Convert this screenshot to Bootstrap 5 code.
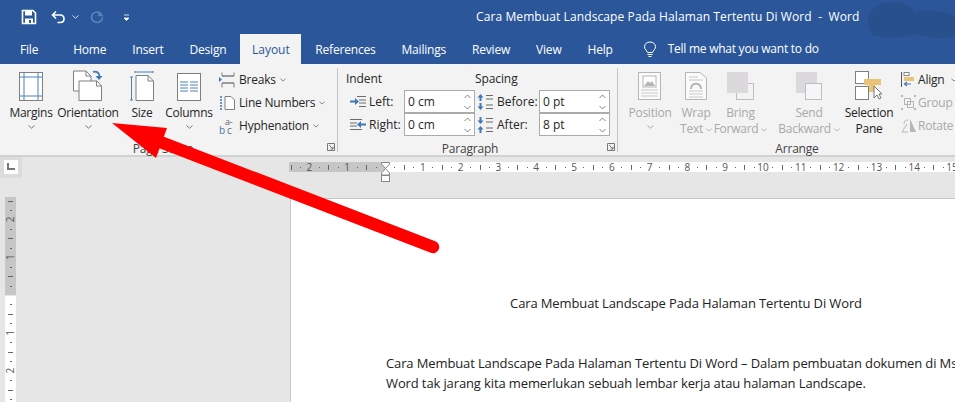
<!DOCTYPE html>
<html lang="id">
<head>
    <meta charset="UTF-8">
    <meta name="viewport" content="width=device-width, initial-scale=1.0">
    <title>Cara Membuat Landscape Pada Halaman Tertentu Di Word - Word</title>
    <link href="https://cdn.jsdelivr.net/npm/bootstrap@5.3.0/dist/css/bootstrap.min.css" rel="stylesheet">
    <style>
        html, body { height: 402px; overflow: hidden; }
        body { font-family: "Open Sans", "Noto Sans", sans-serif; font-size: 12px; color: #262626; background: #e6e6e6; position: relative; width: 955px; }
        svg { display: block; flex: none; }

        .title-area { background: #2b579a; color: #fff; height: 64px; position: relative; overflow: hidden; }
        .title-blob { position: absolute; right: 0; top: 0; }
        .qat { height: 34px; position: relative; }
        .qat-group { width: 134px; flex: none; padding-left: 21px; }
        .doc-title { margin-left: 342px; white-space: pre; letter-spacing: .1px; }
        .tab-row { height: 30px; position: relative; padding-left: 6px; }
        .tab-item { padding: 7px 13px 0; height: 30px; white-space: nowrap; letter-spacing: -.2px; }
        .tab-file { padding-left: 14px; padding-right: 22px; }
        .tab-on { background: #f3f3f3; color: #2b579a; height: 30px; width: 61px; text-align: center; padding: 7px 0 0; margin: 0 1px; }
        .tell-me { margin-left: 17px; height: 30px; letter-spacing: -.25px; }
        .tell-text { margin-left: 11px; }

        .ribbon { background: #f3f3f3; height: 93px; border-bottom: 2px solid #d2d2d2; }
        .rb-group { height: 91px; position: relative; flex: none; }
        .rb-group::after { content: ""; position: absolute; right: 0; top: 4px; bottom: 3px; width: 1px; background: #c6c6c6; }
        .rb-last::after { display: none; }
        .rb-label { position: absolute; left: 0; right: 0; top: 77px; text-align: center; line-height: 15px; color: #444; letter-spacing: -.2px; }
        .rb-launch { position: absolute; right: 3px; top: 79px; }
        .big-btn { display: flex; flex-direction: column; align-items: center; flex: none; padding-top: 6px; line-height: 16px; letter-spacing: -.25px; white-space: nowrap; }
        .big-ico { height: 31px; margin-bottom: 4px; display: flex; align-items: flex-end; }
        .off { color: #a9a9a9; }
        .small-btn { height: 23px; white-space: nowrap; letter-spacing: -.2px; }
        .para-lbl { height: 26px; padding-top: 7px; line-height: 16px; letter-spacing: -.1px; }
        .spin-box { height: 23px; width: 71px; background: #fff; border: 1px solid #ababab; display: flex; justify-content: space-between; align-items: center; padding: 0 3px; }
        .field-row { height: 23px; white-space: nowrap; }

        .work { height: 245px; position: relative; }
        .corner-box { width: 22px; height: 21px; background: #dcdcdc; padding: 3px 4px; }
        .corner-in { width: 14px; height: 14px; background: #fff; padding: 3px; }
        .h-ruler { position: absolute; left: 289px; top: 5px; }
        .v-ruler { position: absolute; left: 5px; top: 40px; }
        .page-sheet { position: absolute; left: 290px; top: 41px; width: 665px; height: 204px; background: #fff; border-left: 1px solid #c6c6c6; border-top: 1px solid #c6c6c6; overflow: hidden; font-size: 13px; color: #222; }
        .page-in { width: 790px; padding-left: 95px; padding-top: 94px; white-space: nowrap; line-height: 20px; letter-spacing: -.12px; }
        .page-head { text-align: center; margin-left: -95px; margin-bottom: 40px; }
        .red-arrow { position: absolute; left: 0; top: 0; pointer-events: none; }
    </style>
</head>
<body>
    <!-- Judul dan tab -->
    <div class="title-area">
        <svg class="title-blob" width="90" height="45" viewBox="0 0 90 45"><path d="M8 36C-2 24 2 6 20 3C34 0 44 4 50 12C60 10 78 10 90 16V37C74 40 58 36 48 34C36 38 24 38 8 36Z" fill="#28508c"/></svg>
        <div class="qat d-flex align-items-center">
            <div class="qat-group d-flex align-items-center">
                <svg width="16" height="16" viewBox="0 0 16 16"><path d="M1.5 1.5H12L14.5 4V14.5H1.5Z" fill="none" stroke="#fff" stroke-width="1.6"/><rect x="4" y="2" width="7" height="4.5" fill="#fff"/><rect x="4" y="9.5" width="8" height="5" fill="#fff"/><rect x="8" y="11" width="2" height="3" fill="#2b579a"/></svg>
                <svg style="margin-left:14px" width="15" height="14" viewBox="0 0 15 14"><path d="M5 1.5L1.5 5L5 8.5M2 5H9C11.5 5 13 6.5 13 8.7C13 11 11.5 12.5 9 12.5H6.5" fill="none" stroke="#fff" stroke-width="1.6"/></svg>
                <svg style="margin-left:6px" width="7" height="4" viewBox="0 0 7 4"><path d="M.5.5L3.5 3.2L6.5.5" fill="none" stroke="#d5deeb" stroke-width="1"/></svg>
                <svg style="margin-left:11px" width="14" height="14" viewBox="0 0 14 14"><path d="M9 1.5V5.5H13M11.5 4.5C10.5 2.8 9 2 7 2C4 2 1.5 4.3 1.5 7.2C1.5 10 4 12.5 7 12.5C10 12.5 12.5 10 12.5 7.2" fill="none" stroke="#5f83b8" stroke-width="1.6"/></svg>
                <svg style="margin-left:19px" width="7" height="7" viewBox="0 0 7 7"><path d="M1 1H6M1 4H6L3.5 6.5Z" fill="#fff" stroke="#fff" stroke-width=".8"/></svg>
            </div>
            <div class="doc-title">Cara Membuat Landscape Pada Halaman Tertentu Di Word  -  Word</div>
        </div>
        <div class="tab-row d-flex align-items-start">
            <div class="tab-item tab-file">File</div>
            <div class="tab-item">Home</div>
            <div class="tab-item">Insert</div>
            <div class="tab-item">Design</div>
            <div class="tab-on">Layout</div>
            <div class="tab-item">References</div>
            <div class="tab-item">Mailings</div>
            <div class="tab-item">Review</div>
            <div class="tab-item">View</div>
            <div class="tab-item">Help</div>
            <div class="tell-me d-flex align-items-center">
                <svg width="14" height="17" viewBox="0 0 14 17"><path d="M4.5 11.5C4 9.5 1.5 8.5 1.5 5.7C1.5 3 4 1 7 1C10 1 12.5 3 12.5 5.7C12.5 8.5 10 9.5 9.5 11.5ZM4.5 13.5H9.5M5.5 15.5H8.5" fill="none" stroke="#fff" stroke-width="1"/></svg>
                <span class="tell-text">Tell me what you want to do</span>
            </div>
        </div>
    </div>

    <!-- Ribbon -->
    <div class="ribbon d-flex">
        <div class="rb-group d-flex" style="width:338px;padding-left:6px">
            <div class="big-btn" style="width:50px">
                <div class="big-ico"><svg width="24" height="29" viewBox="0 0 24 29"><rect x=".5" y=".5" width="23" height="28" fill="#fff" stroke="#7f7f7f"/><path d="M5 1V28M19 1V28M1 5H23M1 24H23" stroke="#4d82b8" fill="none"/></svg></div>
                <span>Margins</span>
                <svg class="mt-1" width="7" height="4" viewBox="0 0 7 4"><path d="M.5.5L3.5 3.2L6.5.5" fill="none" stroke="#777"/></svg>
            </div>
            <div class="big-btn" style="width:64px">
                <div class="big-ico"><svg width="30" height="31" viewBox="0 0 30 31"><path d="M.5 1H13L18 6V21H.5Z" fill="#fff" stroke="#7f7f7f"/><path d="M13 1V6H18" fill="none" stroke="#7f7f7f"/><path d="M6 11H24L28.500 16V30.500H6Z" fill="#fff" stroke="#7f7f7f"/><path d="M23.500 11V16H28.500" fill="none" stroke="#7f7f7f"/><path d="M20 2C23 1 26 2 26.500 6" fill="none" stroke="#3f78b5" stroke-width="1.700"/><path d="M22.500 6H29.500L26 10Z" fill="#3f78b5"/></svg></div>
                <span>Orientation</span>
                <svg class="mt-1" width="7" height="4" viewBox="0 0 7 4"><path d="M.5.5L3.5 3.2L6.5.5" fill="none" stroke="#777"/></svg>
            </div>
            <div class="big-btn" style="width:44px">
                <div class="big-ico"><svg width="24" height="30" viewBox="0 0 24 30"><path d="M6 4.500H18L23.500 10V29.500H6Z" fill="#fff" stroke="#7f7f7f"/><path d="M18 4.500V10H23.500" fill="none" stroke="#7f7f7f"/><path d="M5 1H23M5 0V2M23 0V2M1.500 6V29M0 6H3M0 29H3" fill="none" stroke="#4d82b8"/></svg></div>
                <span>Size</span>
            </div>
            <div class="big-btn" style="width:50px">
                <div class="big-ico"><svg width="24" height="28" viewBox="0 0 24 28"><rect x=".5" y=".5" width="23" height="27" fill="#fff" stroke="#7f7f7f"/><path d="M3 9H11M13 9H21M3 12H11M13 12H21M3 15H11M13 15H21M3 18H11M13 18H21" stroke="#4d82b8" fill="none"/></svg></div>
                <span>Columns</span>
                <svg class="mt-1" width="7" height="4" viewBox="0 0 7 4"><path d="M.5.5L3.5 3.2L6.5.5" fill="none" stroke="#777"/></svg>
            </div>
            <div class="d-flex flex-column" style="padding-top:4px;margin-left:5px">
                <div class="small-btn d-flex align-items-center gap-1">
                    <svg width="16" height="16" viewBox="0 0 16 16"><path d="M3 .5V4H15V.5M3 15.500V11H15V15.500M3 4H15M3 11H15" fill="none" stroke="#7f7f7f"/><path d="M0 5L3 7.500L0 10Z" fill="#3f78b5"/></svg>
                    <span>Breaks</span><svg width="6" height="4" viewBox="0 0 7 4"><path d="M.5.5L3.5 3.2L6.5.5" fill="none" stroke="#777"/></svg>
                </div>
                <div class="small-btn d-flex align-items-center gap-1">
                    <svg width="16" height="16" viewBox="0 0 16 16"><path d="M6 1.500H12L15.500 5V14.500H6Z" fill="#fff" stroke="#7f7f7f"/><path d="M1 2H4M1 5H4M1 8H4M1 11H4M1 14H4" stroke="#3f78b5" stroke-width="1.500" stroke-dasharray="2 1" fill="none"/></svg>
                    <span>Line Numbers</span><svg width="6" height="4" viewBox="0 0 7 4"><path d="M.5.5L3.5 3.2L6.5.5" fill="none" stroke="#777"/></svg>
                </div>
                <div class="small-btn d-flex align-items-center gap-1">
                    <svg width="16" height="20" viewBox="0 0 16 20"><text x="6" y="9" font-size="9" fill="#666" font-family="Open Sans">a-</text><text x="0" y="18" font-size="10" fill="#3f78b5" font-family="Open Sans">b</text><text x="8" y="18" font-size="10" fill="#666" font-family="Open Sans">c</text></svg>
                    <span>Hyphenation</span><svg width="6" height="4" viewBox="0 0 7 4"><path d="M.5.5L3.5 3.2L6.5.5" fill="none" stroke="#777"/></svg>
                </div>
            </div>
            <div class="rb-label" style="padding-right:12px">Page Setup</div>
            <svg class="rb-launch" width="8" height="8" viewBox="0 0 8 8"><path d="M.5 7.500V.5H7.500V7.500ZM2 2L6 6M6 3.500V6H3.500" fill="none" stroke="#777"/></svg>
        </div>

        <div class="rb-group" style="width:280px;padding-left:8px">
            <div class="d-flex para-lbl">
                <div style="width:129px">Indent</div>
                <div>Spacing</div>
            </div>
            <div class="d-flex">
                <div>
                    <div class="field-row d-flex align-items-center">
                        <svg class="ms-1" width="16" height="12" viewBox="0 0 16 12"><path d="M7 .5H16M9 4H16M9 7H16M9 10.500H16M0 5.500H7" stroke="#6b6b6b" fill="none"/><path d="M0 4.500H5V2L9 5.500L5 9V6.500H0Z" fill="#3f78b5"/></svg>
                        <span style="width:36px;padding-left:3px">Left:</span>
                    </div>
                    <div class="field-row d-flex align-items-center">
                        <svg class="ms-1" width="16" height="12" viewBox="0 0 16 12"><path d="M0 .5H12M0 4H7M0 7H7M0 10.500H12" stroke="#6b6b6b" fill="none"/><path d="M16 4.500H11V2L7 5.500L11 9V6.500H16Z" fill="#3f78b5"/></svg>
                        <span style="width:36px;padding-left:3px">Right:</span>
                    </div>
                </div>
                <div style="margin-left:2px">
                    <div class="spin-box"><span>0 cm</span><svg width="7" height="16" viewBox="0 0 7 16"><path d="M.5 4L3.500 1L6.500 4M.5 12L3.500 15L6.500 12" fill="none" stroke="#808080"/></svg></div>
                    <div class="spin-box"><span>0 cm</span><svg width="7" height="16" viewBox="0 0 7 16"><path d="M.5 4L3.500 1L6.500 4M.5 12L3.500 15L6.500 12" fill="none" stroke="#808080"/></svg></div>
                </div>
                <div style="margin-left:2px">
                    <div class="field-row d-flex align-items-center">
                        <svg width="16" height="16" viewBox="0 0 16 16"><path d="M9 1.500H16M9 5H16M9 11H16M9 14.500H16" stroke="#6b6b6b"/><path d="M3.500 0L6.500 3.500H4.500V7H2.500V3.500H.5ZM3.500 16L6.500 12.500H4.500V9H2.500V12.500H.5Z" fill="#3f78b5"/></svg>
                        <span style="width:46px;padding-left:4px">Before:</span>
                    </div>
                    <div class="field-row d-flex align-items-center">
                        <svg width="16" height="16" viewBox="0 0 16 16"><path d="M9 1.500H16M9 5H16M9 11H16M9 14.500H16" stroke="#6b6b6b"/><path d="M3.500 7L6.500 3.500H4.500V0H2.500V3.500H.5ZM3.500 9L6.500 12.500H4.500V16H2.500V12.500H.5Z" fill="#3f78b5"/></svg>
                        <span style="width:46px;padding-left:4px">After:</span>
                    </div>
                </div>
                <div>
                    <div class="spin-box"><span>0 pt</span><svg width="7" height="16" viewBox="0 0 7 16"><path d="M.5 4L3.500 1L6.500 4M.5 12L3.500 15L6.500 12" fill="none" stroke="#808080"/></svg></div>
                    <div class="spin-box"><span>8 pt</span><svg width="7" height="16" viewBox="0 0 7 16"><path d="M.5 4L3.500 1L6.500 4M.5 12L3.500 15L6.500 12" fill="none" stroke="#808080"/></svg></div>
                </div>
            </div>
            <div class="rb-label" style="padding-right:16px">Paragraph</div>
            <svg class="rb-launch" width="8" height="8" viewBox="0 0 8 8"><path d="M.5 7.500V.5H7.500V7.500ZM2 2L6 6M6 3.500V6H3.500" fill="none" stroke="#777"/></svg>
        </div>

        <div class="rb-group rb-last d-flex" style="width:337px;padding-left:9px">
            <div class="big-btn off" style="width:46px">
                <div class="big-ico" style="height:30px;margin-bottom:5px"><svg width="24" height="28" viewBox="0 0 24 28"><rect x=".5" y=".5" width="22" height="27" fill="#fbfbfb" stroke="#b5b5b5"/><rect x="5" y="4" width="13" height="11" fill="#fff" stroke="#b5b5b5"/><path d="M6 14L10 9L12 11L14 9L17 14Z" fill="#b5b5b5"/><path d="M3 18H20M3 21H20M3 24H20" stroke="#c8c8c8"/></svg></div>
                <span>Position</span>
                <svg class="mt-1" width="7" height="4" viewBox="0 0 7 4"><path d="M.5.5L3.500 3.200L6.500.5" fill="none" stroke="#aaa"/></svg>
            </div>
            <div class="big-btn off" style="width:46px">
                <div class="big-ico" style="height:30px;margin-bottom:5px"><svg width="22" height="28" viewBox="0 0 22 28"><path d="M.5.5H15L21.500 6V27.500H.5Z" fill="#fbfbfb" stroke="#b5b5b5"/><path d="M4 5H13M4 8H18M4 19H18M4 22H18M4 25H18" stroke="#c8c8c8"/><path d="M6 17C6 10 16 10 16 17" fill="none" stroke="#b0b0b0" stroke-width="2"/></svg></div>
                <span>Wrap</span>
                <span>Text <svg class="d-inline" width="6" height="4" viewBox="0 0 7 4"><path d="M.5.5L3.500 3.200L6.500.5" fill="none" stroke="#aaa"/></svg></span>
            </div>
            <div class="big-btn off" style="width:63px;margin-left:-10px">
                <div class="big-ico" style="height:30px;margin-bottom:5px"><svg width="27" height="28" viewBox="0 0 27 28"><rect x="9.500" y="11.500" width="17" height="16" fill="#f3f3f3" stroke="#c0bcc0"/><rect width="21" height="21" fill="#dcd9dc"/></svg></div>
                <span>Bring</span>
                <span>Forward <svg class="d-inline" width="6" height="4" viewBox="0 0 7 4"><path d="M.5.5L3.500 3.200L6.500.5" fill="none" stroke="#aaa"/></svg></span>
            </div>
            <div class="big-btn off" style="width:70px;margin-left:2px">
                <div class="big-ico" style="height:30px;margin-bottom:5px"><svg width="27" height="28" viewBox="0 0 27 28"><rect width="21" height="21" fill="#dcd9dc"/><rect x="9.500" y="11.500" width="16" height="16" fill="#f6f5f7" stroke="#c0bcc0"/></svg></div>
                <span>Send</span>
                <span>Backward <svg class="d-inline" width="6" height="4" viewBox="0 0 7 4"><path d="M.5.5L3.500 3.200L6.500.5" fill="none" stroke="#aaa"/></svg></span>
            </div>
            <div class="big-btn" style="width:56px;margin-left:-3px;color:#222">
                <div class="big-ico" style="height:30px;margin-bottom:5px"><svg width="28" height="29" viewBox="0 0 28 29"><rect x=".5" y=".5" width="13" height="12" fill="#fff" stroke="#7f7f7f"/><rect x=".5" y="15.500" width="13" height="13" fill="#fff" stroke="#7f7f7f"/><path d="M9 8H26V14H20V21H14V14H9Z" fill="#e9c476"/><path d="M19 15V27L22 24L24 28L26 27L24 23H27Z" fill="#fff" stroke="#777"/></svg></div>
                <span>Selection</span>
                <span>Pane</span>
            </div>
            <div class="d-flex flex-column" style="padding-top:4px;margin-left:4px;color:#262626">
                <div class="small-btn d-flex align-items-center" style="gap:2px">
                    <svg width="15" height="15" viewBox="0 0 15 15"><path d="M.5 0V15" stroke="#555"/><rect x="3" y=".5" width="5" height="3" fill="#fff" stroke="#888"/><rect x="3" y="5" width="10" height="4" fill="#e9c476"/><path d="M10 12H4M6 10L3.500 12L6 14" fill="none" stroke="#3f78b5" stroke-width="1.200"/></svg>
                    <span>Align</span><svg class="ms-1" width="6" height="4" viewBox="0 0 7 4"><path d="M.5.5L3.500 3.200L6.500.5" fill="none" stroke="#777"/></svg>
                </div>
                <div class="small-btn d-flex align-items-center off" style="gap:2px">
                    <svg width="15" height="15" viewBox="0 0 15 15"><rect x="3.500" y="3.500" width="6" height="6" fill="none" stroke="#b5b5b5"/><rect x="6.500" y="6.500" width="6" height="6" fill="none" stroke="#b5b5b5"/><path d="M0 0H2V2H0ZM13 0H15V2H13ZM0 13H2V15H0ZM13 13H15V15H13Z" fill="#b5b5b5"/></svg>
                    <span>Group</span><svg class="ms-1" width="6" height="4" viewBox="0 0 7 4"><path d="M.5.5L3.500 3.200L6.500.5" fill="none" stroke="#aaa"/></svg>
                </div>
                <div class="small-btn d-flex align-items-center off" style="gap:2px">
                    <svg width="15" height="15" viewBox="0 0 15 15"><path d="M9 1V14H15Z" fill="#b5b5b5"/><path d="M6 6L1 14H7" fill="none" stroke="#b5b5b5"/><path d="M3 6C3 3 5 2 7 2" fill="none" stroke="#b5b5b5"/></svg>
                    <span>Rotate</span>
                </div>
            </div>
            <div class="rb-label" style="padding-left:21px">Arrange</div>
        </div>
    </div>

    <!-- Area kerja -->
    <div class="work">
        <div class="corner-box"><div class="corner-in"><svg width="8" height="8" viewBox="0 0 8 8"><path d="M1 0V6H8" fill="none" stroke="#777" stroke-width="2"/></svg></div></div>
        <svg class="h-ruler" id="h-ruler" width="666" height="24" viewBox="0 0 666 24"></svg>
        <svg class="v-ruler" id="v-ruler" width="14" height="205" viewBox="0 0 14 205"></svg>
        <div class="page-sheet">
            <div class="page-in">
                <div class="page-head">Cara Membuat Landscape Pada Halaman Tertentu Di Word</div>
                <div>Cara Membuat Landscape Pada Halaman Tertentu Di Word – Dalam pembuatan dokumen di Ms</div>
                <div>Word tak jarang kita memerlukan sebuah lembar kerja atau halaman Landscape.</div>
            </div>
        </div>
    </div>

    <!-- Panah merah di atas semuanya -->
    <svg class="red-arrow" width="955" height="402" viewBox="0 0 955 402">
        <path d="M433 247L150 138" stroke="#ff0000" stroke-width="12.500" stroke-linecap="round" fill="none"/>
        <path d="M112 123L167 128L156 158Z" fill="#ff0000"/>
    </svg>

    <script src="https://cdn.jsdelivr.net/npm/bootstrap@5.3.0/dist/js/bootstrap.bundle.min.js"></script>
    <script>
        // Penggaris dibuat dari data: titik nol dan jarak per satuan
        const unit = 37.8;

        function buildHRuler() {
            const zero = 96; // 385 - 289
            let out = `<rect x="0" y="0" width="${zero}" height="10" fill="#c6c6c6"/><rect x="${zero}" y="0" width="570" height="10" fill="#fff"/>`;
            for (let i = -10; i < 70; i++) {
                const x = zero + i * unit / 4;
                if (x < 1 || x > 665 || i === 0) continue;
                if (i % 4 === 0) {
                    out += `<text x="${x}" y="9" font-size="10" text-anchor="middle" fill="#555" font-family="Open Sans">${Math.abs(i / 4)}</text>`;
                } else if (i % 2 === 0) {
                    out += `<rect x="${Math.round(x)}" y="3" width="1" height="5" fill="#666"/>`;
                } else {
                    out += `<rect x="${Math.round(x)}" y="5" width="1" height="1" fill="#666"/>`;
                }
            }
            // penanda indent
            out += `<path d="M92.500 .5H100.500V2L96.500 6.500L92.500 2ZM96.500 6.500L100.500 11V13H92.500V11Z" fill="#fff" stroke="#888"/><rect x="92.500" y="13.500" width="8" height="6" fill="#fff" stroke="#888"/>`;
            document.getElementById('h-ruler').innerHTML = out;
        }

        function buildVRuler() {
            const zero = 98; // 295 - 197
            let out = `<rect x="0" y="0" width="11" height="${zero}" fill="#c6c6c6"/><rect x="0" y="${zero + 1}" width="11" height="110" fill="#fff"/>`;
            for (let i = -10; i < 30; i++) {
                const y = zero + i * unit / 4;
                if (y < 1 || y > 205 || i === 0) continue;
                if (i % 4 === 0) {
                    out += `<text transform="translate(9 ${y}) rotate(-90)" font-size="10" text-anchor="middle" fill="#555" font-family="Open Sans">${Math.abs(i / 4)}</text>`;
                } else if (i % 2 === 0) {
                    out += `<rect x="3" y="${Math.round(y)}" width="5" height="1" fill="#666"/>`;
                } else {
                    out += `<rect x="5" y="${Math.round(y)}" width="2" height="1" fill="#666"/>`;
                }
            }
            document.getElementById('v-ruler').innerHTML = out;
        }

        buildHRuler();
        buildVRuler();
    </script>
</body>
</html>
